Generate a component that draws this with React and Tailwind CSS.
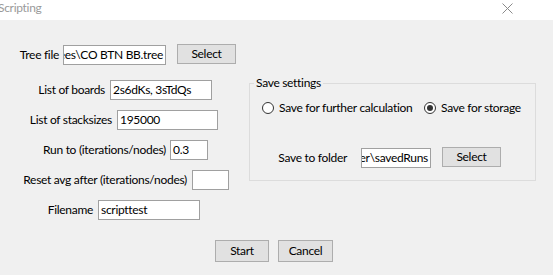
import React from 'react';

const font = { fontFamily: 'Lato, "Noto Sans", sans-serif' };

const Field = ({ width, children, alignEnd }) => (
  <div
    className={`h-[20px] ${width} bg-white border border-[#a0a0a0] flex items-center overflow-hidden whitespace-nowrap px-[2px] ${alignEnd ? 'justify-end' : ''}`}
  >
    <span className="leading-none">{children}</span>
  </div>
);

const Button = ({ width, height = 'h-[20px]', children }) => (
  <div className={`${width} ${height} bg-[#e1e1e1] border border-[#adadad] flex items-center justify-center`}>
    {children}
  </div>
);

const Row = ({ labelWidth, label, gap = 'ml-[5px]', children }) => (
  <div className="flex items-center h-[20px]">
    <div className={`${labelWidth} shrink-0 text-right whitespace-nowrap`}>{label}</div>
    <div className={gap}>{children}</div>
  </div>
);

const Radio = ({ checked, label, width }) => (
  <div className={`flex items-center ${width}`}>
    <div className="w-[12px] h-[12px] shrink-0 rounded-full border border-[#333] bg-white flex items-center justify-center">
      {checked && <div className="w-[6px] h-[6px] rounded-full bg-[#333]" />}
    </div>
    <span className="ml-[5px] whitespace-nowrap">{label}</span>
  </div>
);

const App = () => {
  return (
    <div className="w-[553px] h-[275px] bg-[#f0f0f0] text-[12px] tracking-[-0.3px] text-black overflow-hidden" style={font}>
      {/* Title bar */}
      <div className="h-[20px] bg-white flex items-start justify-between pt-[1px]">
        <span className="ml-[-2px] text-[#9a9a9a] leading-[14px]">Scripting</span>
        <svg width="11" height="11" viewBox="0 0 11 11" className="mr-[40px] mt-[2px]">
          <path d="M0.5 0.5 L10.5 10.5 M10.5 0.5 L0.5 10.5" stroke="#8a8a8a" strokeWidth="1" />
        </svg>
      </div>

      {/* Tree file */}
      <div className="flex items-start mt-[24px]">
        <div className="w-[59px] shrink-0 text-right leading-[20px] mt-[1px] whitespace-nowrap">Tree file</div>
        <div className="ml-[4px] mt-[1px]">
          <Field width="w-[103px]" alignEnd>rees\CO BTN BB.tree</Field>
        </div>
        <div className="ml-[11px]">
          <Button width="w-[59px]">Select</Button>
        </div>
      </div>

      <div className="flex items-start mt-[11px]">
        {/* Left column */}
        <div className="w-[249px] shrink-0 pt-[4px] flex flex-col gap-[10px]">
          <Row labelWidth="w-[105px]" label="List of boards">
            <Field width="w-[102px]">2s6dKs, 3sTdQs</Field>
          </Row>
          <Row labelWidth="w-[112px]" label="List of stacksizes">
            <Field width="w-[101px]">195000</Field>
          </Row>
          <Row labelWidth="w-[166px]" label="Run to (iterations/nodes)" gap="ml-[4px]">
            <Field width="w-[38px]">0.3</Field>
          </Row>
          <Row labelWidth="w-[187px]" label="Reset avg after (iterations/nodes)">
            <Field width="w-[37px]"></Field>
          </Row>
          <Row labelWidth="w-[93px]" label="Filename">
            <Field width="w-[102px]">scripttest</Field>
          </Row>
        </div>

        {/* Save settings group */}
        <fieldset className="w-[287px] h-[105px] border border-[#dcdcdc]">
          <legend className="ml-[4px] px-[2px] leading-[14px]">Save settings</legend>
          <div className="flex items-center h-[14px] mt-[11px] pl-[12px]">
            <Radio label="Save for further calculation" width="w-[162px]" />
            <Radio checked label="Save for storage" />
          </div>
          <div className="flex items-start mt-[32px]">
            <div className="w-[97px] shrink-0 text-right leading-[20px] mt-[1px] whitespace-nowrap">Save to folder</div>
            <div className="ml-[14px] mt-[1px]">
              <Field width="w-[70px]" alignEnd>ter\savedRuns</Field>
            </div>
            <div className="ml-[11px]">
              <Button width="w-[59px]">Select</Button>
            </div>
          </div>
        </fieldset>
      </div>

      {/* Bottom buttons */}
      <div className="flex mt-[20px] ml-[215px] gap-[9px]">
        <Button width="w-[54px]" height="h-[22px]">Start</Button>
        <Button width="w-[55px]" height="h-[22px]">Cancel</Button>
      </div>
    </div>
  );
};

export default App;
